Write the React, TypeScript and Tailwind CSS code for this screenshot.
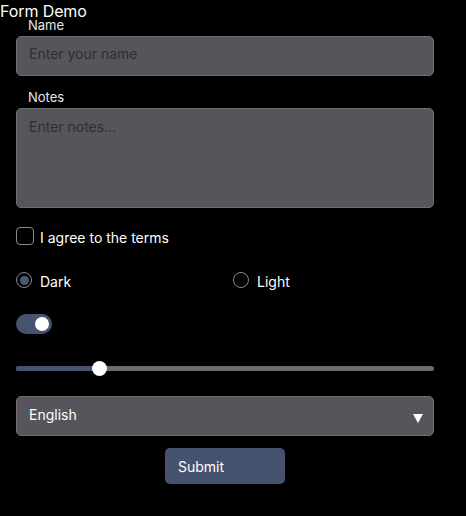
import React from "react";

export default function App() {
  return (
    <div className="min-h-[516px] w-full bg-black text-white font-['Inter','Liberation_Sans',sans-serif]">
      <h1 className="pt-[3px] text-[16px] leading-[16px] font-normal tracking-[-0.1px]">Form Demo</h1>
      <div className="ml-4 w-[418px]">
        <label className="block pl-3 text-[13px] leading-[13px] text-gray-200">Name</label>
        <input
          className="mt-[4px] block h-[40px] w-full rounded-[5px] border border-[#6d6d72] bg-[#56555b] px-3 pb-[5px] text-[14px] text-white placeholder:text-[#2f2f33] outline-none"
          placeholder="Enter your name"
        />
        <label className="mt-[15px] block pl-3 text-[13px] leading-[13px] text-gray-200">Notes</label>
        <textarea
          className="mt-[4px] block h-[100px] w-full resize-none rounded-[5px] border border-[#6d6d72] bg-[#56555b] px-3 pt-[7px] text-[14px] text-white placeholder:text-[#2f2f33] outline-none"
          placeholder="Enter notes..."
        />
        <div className="mt-[19px] flex items-start gap-[6px]">
          <span className="block h-[18px] w-[18px] rounded-[4px] border border-[#8a8a8e] bg-black" />
          <span className="mt-[1px] text-[14px] leading-[20px]">I agree to the terms</span>
        </div>
        <div className="mt-[24px] grid grid-cols-2 gap-2">
          <div className="flex items-start gap-[8px]">
            <span className="flex h-[16px] w-[16px] items-center justify-center rounded-full border border-[#8a8a8e]">
              <span className="block h-[9px] w-[9px] rounded-full bg-[#4a5775]" />
            </span>
            <span className="text-[14px] leading-[20px]">Dark</span>
          </div>
          <div className="flex items-start gap-[8px] pl-[4px]">
            <span className="block h-[16px] w-[16px] rounded-full border border-[#8a8a8e]" />
            <span className="text-[14px] leading-[20px]">Light</span>
          </div>
        </div>
        <div className="mt-[22px] flex h-[20px] w-[36px] items-center justify-end rounded-full bg-[#46536f] pr-[3px]">
          <span className="block h-[14px] w-[14px] rounded-full bg-white" />
        </div>
        <div className="relative mt-[32px] h-[5px] w-full rounded-full bg-[#6b6b6e]">
          <div className="h-full w-[83px] rounded-full bg-[#46536f]" />
          <span className="absolute left-[76px] top-[-5px] block h-[15px] w-[15px] rounded-full bg-white" />
        </div>
        <div className="mt-[25px] flex h-[40px] w-full items-center justify-between rounded-[5px] border border-[#6d6d72] bg-[#56555b] pl-3 pr-[10px]">
          <span className="-mt-[4px] text-[14px]">English</span>
          <svg width="10" height="9" viewBox="0 0 10 9" className="mt-[4px]">
            <polygon points="0,0 10,0 5,9" fill="white" />
          </svg>
        </div>
        <div className="mt-[12px] flex justify-center">
          <button className="h-[36px] w-[120px] rounded-[5px] bg-[#45526f] pl-[13px] text-left text-[14px] text-white">
            Submit
          </button>
        </div>
      </div>
    </div>
  );
}
